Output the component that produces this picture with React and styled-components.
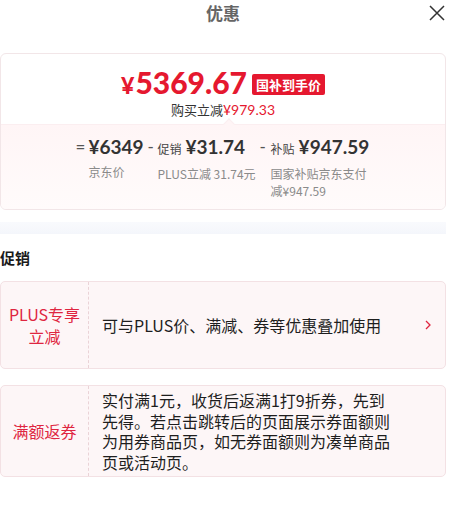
import React from "react";
import styled, { createGlobalStyle } from "styled-components";

const GlobalStyle = createGlobalStyle`
  html, body { margin: 0; padding: 0; background: #fff; }
  body { font-family: "Noto Sans CJK SC", "Noto Sans", sans-serif; color: #222; }
`;

const Page = styled.div`
  width: 446px;
`;

const Header = styled.div`
  position: relative;
  height: 26px;
  display: flex;
  justify-content: center;
  align-items: center;
  margin-bottom: 27px;
`;

const Title = styled.div`
  font-size: 17px;
  font-weight: 700;
  color: #666;
  line-height: 24px;
`;

const Close = styled.button`
  position: absolute;
  right: 0;
  top: 4px;
  width: 18px;
  height: 18px;
  padding: 0;
  border: 0;
  background: none;
`;

const Card = styled.div`
  border: 1px solid #f2e6e8;
  border-radius: 6px;
  overflow: hidden;
`;

const Top = styled.div`
  padding: 12px 0 5px;
  display: flex;
  flex-direction: column;
  align-items: center;
`;

const PriceLine = styled.div`
  display: flex;
  align-items: center;
  height: 32px;
`;

const Price = styled.span`
  font-family: "Lato", "Noto Sans", sans-serif;
  font-weight: 900;
  font-size: 30px;
  color: #e5182f;
  small { font-size: 23px; margin-right: 1px; }
`;

const Badge = styled.span`
  margin-left: 5px;
  margin-top: 4px;
  background: #e5182f;
  color: #fff;
  font-size: 13px;
  font-weight: 700;
  line-height: 21px;
  padding: 0 4px;
  border-radius: 2px;
`;

const Save = styled.div`
  margin-top: 3px;
  font-size: 13px;
  color: #333;
  line-height: 18px;
  em {
    font-style: normal;
    color: #e5182f;
    font-family: "Lato", "Noto Sans", sans-serif;
    font-size: 14px;
  }
`;

const Detail = styled.div`
  position: relative;
  background: linear-gradient(#fff5f6, #fffbfb);
  border-top: 1px solid #fbeef0;
  padding: 9px 0 10px;
  display: flex;
  justify-content: center;
  gap: 4px;
  &::before {
    content: "";
    position: absolute;
    top: -5px;
    left: 50%;
    margin-left: 2px;
    width: 7px;
    height: 7px;
    background: #fff5f6;
    border-left: 1px solid #fbeef0;
    border-top: 1px solid #fbeef0;
    transform: rotate(45deg);
  }
`;

const Col = styled.div`
  display: flex;
  align-items: flex-start;
`;

const Sign = styled.span`
  font-family: "Lato", "Noto Sans", sans-serif;
  font-size: 17px;
  line-height: 26px;
  color: #555;
  width: ${(p) => p.$w}px;
`;

const Block = styled.div`
  display: flex;
  flex-direction: column;
  max-width: ${(p) => (p.$max ? `${p.$max}px` : "none")};
`;

const Value = styled.div`
  display: flex;
  align-items: baseline;
  line-height: 26px;
  white-space: nowrap;
  color: #333;
  small { font-size: 12px; margin-right: 4px; color: #444; }
  b {
    font-family: "Lato", "Noto Sans", sans-serif;
    font-weight: 700;
    font-size: 19px;
  }
`;

const Label = styled.div`
  margin-top: 3px;
  font-size: 12px;
  line-height: 17px;
  color: #8a8a8a;
`;

const Band = styled.div`
  height: 12px;
  margin-top: 12px;
  background: linear-gradient(#f9fafd, #f4f6fb);
`;

const SectionTitle = styled.div`
  margin-top: 14px;
  font-size: 15px;
  font-weight: 700;
  color: #1a1a1a;
  line-height: 20px;
`;

const Promo = styled.div`
  display: flex;
  margin-top: ${(p) => p.$mt}px;
  min-height: 86px;
  background: #fdf6f7;
  border: 1px solid #f3e1e4;
  border-radius: 5px;
`;

const PromoTag = styled.div`
  width: 87px;
  flex-shrink: 0;
  display: flex;
  align-items: center;
  justify-content: center;
  text-align: center;
  border-right: 1px dashed #ead3d7;
  color: #df2540;
  font-size: 16px;
  line-height: 22px;
`;

const PromoText = styled.div`
  flex: 1;
  display: flex;
  align-items: center;
  padding: 4px 52px 4px 13px;
  font-size: 16px;
  line-height: 20.5px;
  color: #1e1e1e;
  position: relative;
`;

const Chevron = styled.svg`
  position: absolute;
  right: 13px;
  top: 50%;
  margin-top: -6px;
`;

const App = () => {
  return (
    <Page>
      <GlobalStyle />
      <Header>
        <Title>优惠</Title>
        <Close aria-label="close">
          <svg width="18" height="18" viewBox="0 0 18 18">
            <path d="M2 2 L16 16 M16 2 L2 16" stroke="#333" strokeWidth="1.5" fill="none" />
          </svg>
        </Close>
      </Header>

      <Card>
        <Top>
          <PriceLine>
            <Price><small>¥</small>5369.67</Price>
            <Badge>国补到手价</Badge>
          </PriceLine>
          <Save>购买立减<em>¥979.33</em></Save>
        </Top>
        <Detail>
          <Col>
            <Sign $w={13}>=</Sign>
            <Block>
              <Value><b>¥6349</b></Value>
              <Label>京东价</Label>
            </Block>
          </Col>
          <Col>
            <Sign $w={10}>-</Sign>
            <Block>
              <Value><small>促销</small><b>¥31.74</b></Value>
              <Label>PLUS立减 31.74元</Label>
            </Block>
          </Col>
          <Col>
            <Sign $w={11}>-</Sign>
            <Block $max={100}>
              <Value><small>补贴</small><b>¥947.59</b></Value>
              <Label>国家补贴京东支付减¥947.59</Label>
            </Block>
          </Col>
        </Detail>
      </Card>

      <Band />

      <SectionTitle>促销</SectionTitle>

      <Promo $mt={13}>
        <PromoTag>PLUS专享<br />立减</PromoTag>
        <PromoText>
          可与PLUS价、满减、券等优惠叠加使用
          <Chevron width="8" height="12" viewBox="0 0 8 12">
            <path d="M2 2 L6 6 L2 10" stroke="#df2540" strokeWidth="1.3" fill="none" />
          </Chevron>
        </PromoText>
      </Promo>

      <Promo $mt={16}>
        <PromoTag>满额返券</PromoTag>
        <PromoText>
          实付满1元，收货后返满1打9折券，先到先得。若点击跳转后的页面展示券面额则为用券商品页，如无券面额则为凑单商品页或活动页。
        </PromoText>
      </Promo>
    </Page>
  );
};

export default App;
